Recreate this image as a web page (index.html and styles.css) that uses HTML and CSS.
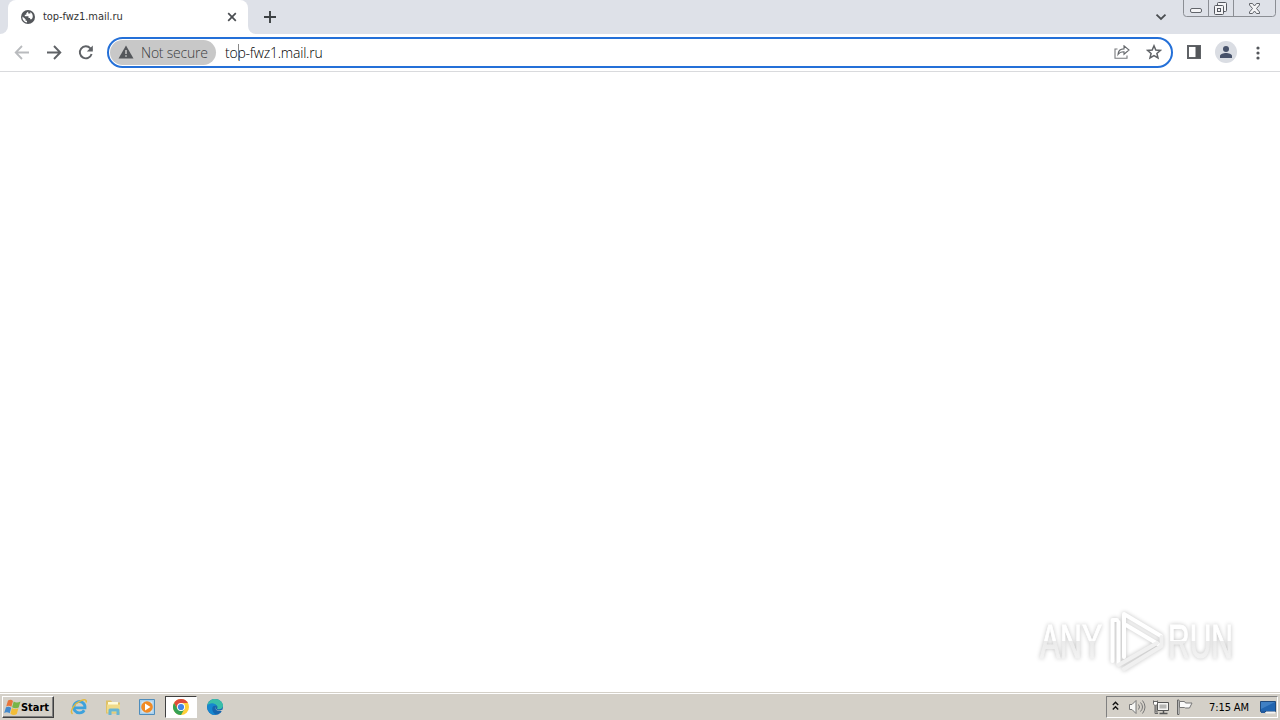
FILE: index.html
```html
<!DOCTYPE html>
<html lang="en">
<head>
    <meta charset="UTF-8">
    <meta name="viewport" content="width=device-width, initial-scale=1.0">
    <title>top-fwz1.mail.ru</title>
    <link rel="stylesheet" href="styles.css">
</head>
<body>
    <header class="tab-strip">
        <div class="strip-edge"></div>
        <div class="tab">
            <svg class="favicon" width="14" height="14" viewBox="0 0 14 14">
                <circle cx="7" cy="7" r="7" fill="#54575b"/>
                <path d="M7.2 1.5 5.3 3.2v1.500H3.800v1.600h3.700v1.600h1.600v1.300h1.400l1-1.100A5.600 5.600 0 0 0 9.400 2v1.400H7.200zM1.400 6.500l3.200 2.800v1.500H6v1.800A5.600 5.600 0 0 1 1.400 6.500z" fill="#fff"/>
            </svg>
            <span class="tab-title">top-fwz1.mail.ru</span>
            <svg class="tab-close" width="10" height="10" viewBox="0 0 10 10"><path d="M1.200 1.200l7.600 7.600M8.800 1.200L1.200 8.800" stroke="#4a4d51" stroke-width="1.700"/></svg>
        </div>
        <div class="strip-rest">
            <svg class="new-tab" width="12" height="12" viewBox="0 0 12 12"><path d="M6 0v12M0 6h12" stroke="#3c4043" stroke-width="1.900"/></svg>
            <svg class="tab-search" width="12" height="8" viewBox="0 0 12 8"><path d="M1.500 1.600L6 6l4.500-4.400" fill="none" stroke="#4a4d51" stroke-width="1.800"/></svg>
            <svg class="window-buttons" width="94" height="18" viewBox="0 0 94 18">
                <path d="M.5 0v13.500q0 3 3 3h86q3 0 3-3V0M25.500 0v16M50.500 0v16" fill="none" stroke="#8b8e94"/>
                <rect x="7.500" y="8.500" width="11" height="4" rx="1.500" fill="#f4f4f6" stroke="#62656b"/>
                <rect x="34.500" y="2.500" width="9" height="9" rx="1" fill="#f4f4f6" stroke="#55585f"/>
                <rect x="31.500" y="5.500" width="9" height="9" rx="1" fill="#f4f4f6" stroke="#55585f"/>
                <rect x="34.500" y="8.500" width="3" height="3" fill="none" stroke="#55585f"/>
                <path d="M66.500 3.500h3l2 2.500 2-2.500h3v1.500l-3 3.500 3 3.500v1.500h-3l-2-2.500-2 2.500h-3V12l3-3.500-3-3.500z" fill="#f4f4f6" stroke="#62656b"/>
            </svg>
        </div>
    </header>

    <div class="toolbar">
        <nav class="nav-buttons">
            <svg width="16" height="16" viewBox="0 0 16 16"><path d="M15 7.500H2M8 1L1.700 7.500 8 14" fill="none" stroke="#b9bbbe" stroke-width="1.800"/></svg>
            <svg width="16" height="16" viewBox="0 0 16 16"><path d="M1 7.500h13M8 1L14.300 7.500 8 14" fill="none" stroke="#5f6266" stroke-width="1.900"/></svg>
            <svg width="16" height="16" viewBox="0 0 16 16"><path d="M13.600 9A6 6 0 1 1 12.400 3.400L14 5" fill="none" stroke="#5f6266" stroke-width="1.900"/><path d="M14.800 .5v6H8.800z" fill="#5f6266"/></svg>
        </nav>
        <div class="omnibox">
            <div class="security-chip">
                <svg class="warning" width="16" height="14" viewBox="0 0 16 14"><path d="M8 .5L15.500 13.500H.5z" fill="#54575b"/><path d="M8 5v4M8 10.300v1.500" stroke="#c8c8c8" stroke-width="1.500"/></svg>
                <span>Not secure</span>
            </div>
            <div class="url">top-fwz1.mail.ru<i class="pointer"></i></div>
            <svg class="share" width="16" height="14" viewBox="0 0 16 14"><path d="M3.500 4H1v9.200h12V10.500" fill="none" stroke="#77797d" stroke-width="1.100"/><path d="M4 9.500c.2-4 2-5.500 6-5.600V.8L15 5 10 9.200V6.800C7.300 6.800 5.300 7.500 4 9.500z" fill="none" stroke="#66696d" stroke-width="1.100"/></svg>
            <svg class="star" width="16" height="16" viewBox="0 0 16 16"><path d="M8 1.800l1.800 4.200 4.600.4-3.500 3 1.100 4.500L8 11.500l-4 2.400 1.100-4.500-3.500-3 4.600-.4z" fill="none" stroke="#5f6266" stroke-width="1.500"/></svg>
        </div>
        <svg class="side-panel" width="14" height="14" viewBox="0 0 14 14"><path d="M1 1h12v12H1z" fill="none" stroke="#5f6266" stroke-width="2"/><path d="M8.500 1H13v12H8.500z" fill="#54575b"/></svg>
        <svg class="profile" width="22" height="22" viewBox="0 0 22 22"><circle cx="11" cy="11" r="11" fill="#dadde3"/><circle cx="11" cy="8" r="3" fill="#47526a"/><path d="M5 17v-2c0-2 3.500-3 6-3s6 1 6 3v2z" fill="#47526a"/></svg>
        <svg class="menu" width="4" height="14" viewBox="0 0 4 14"><circle cx="2" cy="2" r="1.600" fill="#54575b"/><circle cx="2" cy="7" r="1.600" fill="#54575b"/><circle cx="2" cy="12" r="1.600" fill="#54575b"/></svg>
    </div>

    <main class="page">
        <svg class="watermark" width="210" height="74" viewBox="0 0 210 74">
            <defs>
                <linearGradient id="fade" gradientUnits="userSpaceOnUse" x1="0" y1="20" x2="0" y2="57">
                    <stop offset="0" stop-color="#fff"/>
                    <stop offset=".48" stop-color="#fff"/>
                    <stop offset=".5" stop-color="#ebebeb"/>
                    <stop offset="1" stop-color="#f3f3f3"/>
                </linearGradient>
            </defs>
            <g class="watermark-text">
                <text x="8" y="55" textLength="62" lengthAdjust="spacingAndGlyphs">ANY</text>
                <text x="136" y="55" textLength="65" lengthAdjust="spacingAndGlyphs">RUN</text>
            </g>
            <g class="watermark-play">
                <path d="M92 54V11L129 33"/>
                <path d="M85 17H80.500V58M86.500 19v42"/>
                <path d="M94 22L126 41"/>
                <path class="dim" d="M86.500 62L125 40M92 66L129.500 43V34"/>
            </g>
        </svg>
    </main>

    <footer class="taskbar">
        <div class="start">
            <svg width="17" height="17" viewBox="0 0 17 17">
                <path d="M4 1.500Q7 0 9 2L7.400 7.800Q4.800 6 2.200 7.500z" fill="#e8753a"/>
                <path d="M9.700 2.400Q12.500 4.500 16.500 2.500L14.700 8.400Q11.500 10 8.100 8.200z" fill="#78b548"/>
                <path d="M2 8.300Q4.600 7 7.200 8.700L5.700 14.300Q3 12.500 .2 14z" fill="#4389cc"/>
                <path d="M7.900 9Q11 11 14.400 9.300L12.800 15Q9.700 17 6.400 14.700z" fill="#f2bd38"/>
            </svg>
            <span>Start</span>
        </div>
        <div class="quick-launch">
            <div class="launch">
                <svg width="18" height="18" viewBox="0 0 18 18"><path d="M14.200 12.200A5.700 5.700 0 1 1 15 9.800H4.500" fill="none" stroke="#3ea2dc" stroke-width="2.800"/><path d="M2.500 16C-1 13 5 5 11 2.600c3.500-1.500 6-1 5 2" fill="none" stroke="#e2b93f" stroke-width="1.500"/></svg>
            </div>
            <div class="launch">
                <svg width="17" height="17" viewBox="0 0 17 17"><path d="M1 1.500h5l1.500 2H15v11H1z" fill="#dfc267"/><path d="M3 3h10v4H3z" fill="#fffbd9"/><path d="M2 5.500h13v8H2z" fill="#f0da88"/><path d="M3.500 16v-5q0-1.500 1.500-1.500h8q1.500 0 1.500 1.500v5h-3v-3.500h-5V16z" fill="#67b5d4"/></svg>
            </div>
            <div class="launch">
                <svg width="16" height="16" viewBox="0 0 16 16"><path d="M.5.500h15v15H.5z" fill="#a9d0ec" stroke="#4e8dbc"/><path d="M2.500 2.500h11v11h-11z" fill="#d5e7f3"/><circle cx="8" cy="8" r="5.800" fill="#f08a24"/><path d="M6 4.500L11.500 8 6 11.500z" fill="#fff"/></svg>
            </div>
            <div class="launch active">
                <svg width="16" height="16" viewBox="0 0 16 16"><circle cx="8" cy="8" r="8" fill="#ffcf38"/><path d="M1.070 4A8 8 0 0 1 14.930 4H8L4.540 10z" fill="#df4b3c"/><path d="M1.070 4A8 8 0 0 0 8 16l3.460-6H4.540z" fill="#35a154"/><circle cx="8" cy="8" r="4" fill="#fff"/><circle cx="8" cy="8" r="3.100" fill="#4285e8"/></svg>
            </div>
            <div class="launch">
                <svg width="16" height="16" viewBox="0 0 16 16"><circle cx="8" cy="8" r="8" fill="#1565ae"/><path d="M.2 7C1 2.500 4 0 8 0c5 0 8 3.500 8 6.500S13.500 11 10 10c1.500-3-.5-4.500-3.500-4.500C3.500 5 1.500 5.500.2 7z" fill="#39bea9"/><path d="M.2 7C1.500 3.500 8.500 3 9.500 7c-3-.8-4.500 1-4.200 3.500.2 2.500 2 4.300 4 5.300A8 8 0 0 1 .2 7z" fill="#1687cf"/><path d="M9.800 7c-2 1-1 4.500 2 4.500 1.500 0 3-.5 3.800-1l.4 1.500H12C8.500 12 7.500 8 9.800 7z" fill="#d4d0c8"/></svg>
            </div>
        </div>
        <div class="tray">
            <svg class="chevrons" width="7" height="10" viewBox="0 0 7 10"><path d="M.8 4L3.500 1.300 6.200 4M.8 8.500L3.500 5.800l2.700 2.700" fill="none" stroke="#111" stroke-width="1.400"/></svg>
            <svg class="volume" width="17" height="16" viewBox="0 0 17 16"><path d="M.5 5.500H3l4-4v13l-4-4H.5z" fill="#f7f7f5" stroke="#777"/><path d="M9.500 5.500q2 2.500 0 5M11.500 3.500q4 4.500 0 9M13.500 1.500q5 6.500 0 13" fill="none" stroke="#777"/></svg>
            <svg class="network" width="17" height="16" viewBox="0 0 17 16"><path d="M4.500 3.500h11v8h-11z" fill="#f4f4f2" stroke="#555"/><path d="M6.500 5.500h7v4h-7z" fill="#b5b5b3"/><path d="M10.500 12v2M6.500 14.500h8" stroke="#555" stroke-width="1.500"/><path d="M.5 1.500v3q0 1.500 1.500 1.500v8.500h3M4.500 1.500v3Q4.500 6 3 6v7h2M.5 2.500h4" fill="none" stroke="#666"/><path d="M1 3h3v2.500H1z" fill="#fff"/></svg>
            <svg class="flag" width="17" height="16" viewBox="0 0 17 16"><path d="M.5 1v14.500H2V1z" fill="#fff" stroke="#666"/><path d="M2.500 2.500h5l1 1.500h6.500l-2.500 5H8.500L7.500 8.500h-5z" fill="#fafafa" stroke="#777"/></svg>
            <span class="clock">7:15 AM</span>
            <svg class="desktop" width="16" height="13" viewBox="0 0 16 13"><path d="M.5.500h15v10H.5z" fill="#2265b0" stroke="#204a7d"/><path d="M1 1h14L1 8z" fill="#4080c4"/><path d="M6 11.500h9" stroke="#f3f3f3" stroke-width="2"/><path d="M1 11h4" stroke="#235a9c" stroke-width="2"/></svg>
        </div>
    </footer>
</body>
</html>
```
FILE: styles.css
```css
body, html {
    margin: 0;
    padding: 0;
    width: 100%;
    height: 100%;
    overflow: hidden;
}
body {
    display: flex;
    flex-direction: column;
    background: #fff;
    color: #333;
    font-family: "DejaVu Sans Condensed", "DejaVu Sans", sans-serif;
}
svg {
    display: block;
    flex: none;
}

/* tabs */
.tab-strip {
    display: flex;
    height: 34px;
    flex: none;
    background: #fff;
}
.strip-edge {
    width: 8px;
    background: #dee1e8;
    border-bottom-right-radius: 8px;
}
.tab {
    display: flex;
    align-items: center;
    box-sizing: border-box;
    width: 240px;
    padding: 0 11px 0 13px;
    background: linear-gradient(#dee1e8 10px, #fff 10px);
    position: relative;
}
.tab::before {
    content: "";
    position: absolute;
    inset: 0;
    background: #fff;
    border-radius: 8px 8px 0 0;
}
.tab > * {
    position: relative;
}
.tab-title {
    margin-left: 8px;
    font-size: 11px;
    letter-spacing: -0.05px;
    line-height: 14px;
    white-space: nowrap;
}
.tab-close {
    margin-left: auto;
}
.strip-rest {
    display: flex;
    flex: 1;
    align-items: flex-start;
    background: #dee1e8;
    border-bottom-left-radius: 8px;
    padding-left: 16px;
}
.new-tab {
    margin-top: 11px;
}
.tab-search {
    margin: 13px 16px 0 auto;
}
.window-buttons {
    margin-right: 3px;
}

/* toolbar */
.toolbar {
    display: flex;
    align-items: center;
    flex: none;
    box-sizing: border-box;
    height: 38px;
    padding: 0 20px 0 14px;
    border-bottom: 1px solid #d9dadd;
}
.nav-buttons {
    display: flex;
    gap: 16px;
    margin-right: 13px;
}
.omnibox {
    display: flex;
    align-items: center;
    box-sizing: border-box;
    width: 1066px;
    height: 31px;
    padding: 0 9px 0 1px;
    border: 2px solid #2470d8;
    border-radius: 16px;
    font-family: "Open Sans", "Noto Sans", sans-serif;
    font-size: 14px;
    font-weight: 300;
    letter-spacing: -0.22px;
}
.security-chip {
    display: flex;
    align-items: center;
    box-sizing: border-box;
    width: 106px;
    height: 25px;
    padding-left: 8px;
    gap: 7px;
    border-radius: 13px;
    background: #c8c8c8;
    color: #3c3e41;
    white-space: nowrap;
}
.warning {
    margin-bottom: 2px;
}
.url {
    position: relative;
    flex: 1;
    margin-left: 9px;
    color: #000;
}
.pointer {
    position: absolute;
    left: 13px;
    top: 1px;
    width: 1px;
    height: 16px;
    background: #888;
}
.share {
    margin-bottom: 2px;
}
.star {
    margin: 0 0 2px 16px;
}
.side-panel {
    margin: 0 0 1px 14px;
}
.profile {
    margin: 0 0 1px 14px;
}
.menu {
    margin-left: auto;
}

/* content */
.page {
    display: flex;
    flex: 1;
    align-items: flex-end;
    justify-content: flex-end;
    padding: 0 38px 15px 0;
}
.watermark {
    overflow: visible;
    filter: drop-shadow(0 0 2px rgba(0, 0, 0, 0.24));
}
.watermark-text {
    fill: url(#fade);
    stroke: url(#fade);
    stroke-width: 1;
    font: 49px "Liberation Sans", sans-serif;
}
.watermark-play {
    fill: none;
    stroke: #fff;
    stroke-width: 4;
    stroke-linejoin: round;
    stroke-linecap: round;
}
.watermark-play .dim {
    stroke: #f0f0f0;
}

/* taskbar */
.taskbar {
    display: flex;
    align-items: center;
    flex: none;
    box-sizing: border-box;
    height: 28px;
    padding: 1px 2px 0;
    border-top: 1px solid #d4d0c8;
    background: linear-gradient(#fff 1px, #d4d0c8 1px);
    color: #000;
}
.start {
    display: flex;
    align-items: center;
    box-sizing: border-box;
    width: 52px;
    height: 22px;
    padding-left: 1px;
    border: 1px solid;
    border-color: #fff #404040 #404040 #fff;
    box-shadow: inset -1px -1px #808080;
    font-size: 11px;
    font-weight: bold;
    letter-spacing: -0.05px;
}
.quick-launch {
    display: flex;
    gap: 2px;
    margin-left: 9px;
}
.launch {
    display: flex;
    align-items: center;
    justify-content: center;
    box-sizing: border-box;
    width: 32px;
    height: 22px;
}
.launch.active {
    border: 1px solid;
    border-color: #404040 #fff #fff #404040;
    background: #fff;
}
.tray {
    display: flex;
    align-items: center;
    box-sizing: border-box;
    width: 172px;
    height: 22px;
    margin-left: auto;
    padding-left: 5px;
    border: 1px solid;
    border-color: #808080 #fff #fff #808080;
}
.chevrons {
    margin-bottom: 2px;
}
.volume {
    margin-left: 10px;
}
.network, .flag {
    margin-left: 7px;
}
.clock {
    margin-left: 15px;
    font-size: 11px;
    letter-spacing: -0.1px;
    white-space: nowrap;
}
.desktop {
    margin-left: auto;
    margin-right: 1px;
}
```
